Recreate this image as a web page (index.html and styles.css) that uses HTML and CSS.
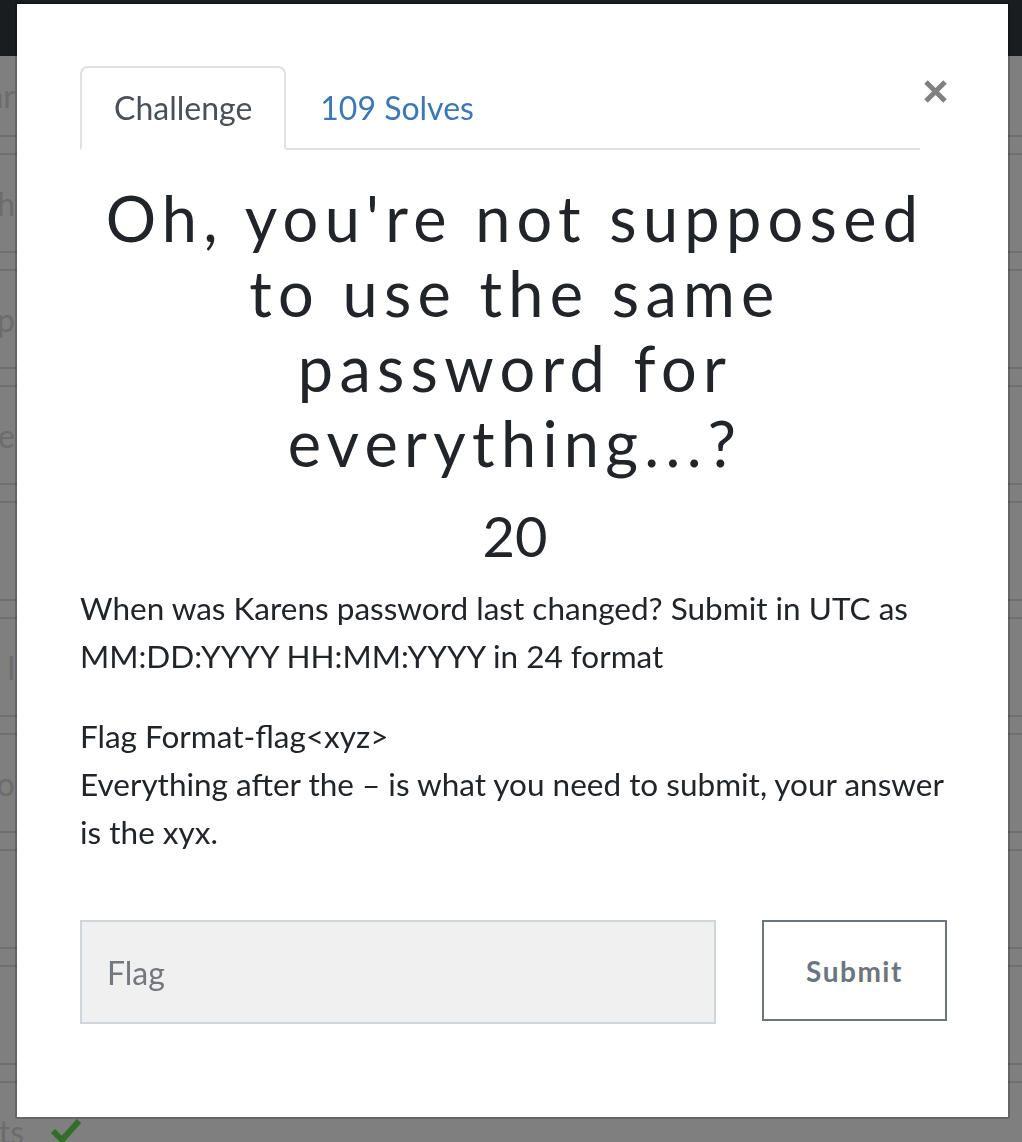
FILE: index.html
```html
<!DOCTYPE html>
<html lang="en">
<head>
<meta charset="utf-8">
<title>Challenge</title>
<link rel="stylesheet" href="styles.css">
</head>
<body>
<div class="page">
  <header class="navbar"></header>
  <div class="rows">
    <div class="row row-first"><span class="cell">ar</span></div>
    <div class="row"><span class="cell">h</span></div>
    <div class="row"><span class="cell">p</span></div>
    <div class="row"><span class="cell">ve</span></div>
    <div class="row"><span class="cell"></span></div>
    <div class="row"><span class="cell">l</span></div>
    <div class="row"><span class="cell">o</span></div>
    <div class="row"><span class="cell"></span></div>
    <div class="row"><span class="cell"></span></div>
    <div class="row"><span class="cell wide">ts</span>
      <svg class="check" width="32" height="30" viewBox="0 0 32 30"><path d="M3 14 L12 23 L29 4" fill="none" stroke="currentColor" stroke-width="6"/></svg>
    </div>
  </div>
</div>
<div class="backdrop"></div>
<div class="modal">
  <div class="modal-header">
    <ul class="tabs">
      <li class="tab active">Challenge</li>
      <li class="tab">109 Solves</li>
    </ul>
    <div class="close">
      <svg width="23" height="23" viewBox="0 0 23 23"><path d="M2 2 L21 21 M21 2 L2 21" stroke="#808080" stroke-width="5"/></svg>
    </div>
  </div>
  <h3 class="name">Oh, you're not supposed to use the same password for everything...?</h3>
  <h4 class="value">20</h4>
  <div class="desc">
    <p>When was Karens password last changed? Submit in UTC as MM:DD:YYYY HH:MM:YYYY in 24 format</p>
    <p>Flag Format-flag&lt;xyz&gt;<br>Everything after the – is what you need to submit, your answer is the xyx.</p>
  </div>
  <form class="flag-form">
    <input class="flag-input" type="text" placeholder="Flag">
    <button class="submit" type="button">Submit</button>
  </form>
</div>
</body>
</html>
```
FILE: styles.css
```css
html, body {
  margin: 0;
  padding: 0;
}
body {
  font-family: Lato, "Liberation Sans", sans-serif;
  background: #fff;
  color: #212529;
  overflow: hidden;
}
.navbar {
  height: 56px;
  background: #343a40;
}
.row {
  display: flex;
  align-items: center;
  height: 96px;
  margin-top: 16px;
  border-top: 2px solid #dedede;
  border-bottom: 2px solid #dedede;
  font-size: 32px;
  color: #d8d8d8;
}
.row-first {
  height: 79px;
  margin-top: 0;
  border-top: none;
}
.cell {
  width: 15px;
  display: flex;
  justify-content: flex-end;
  overflow: hidden;
  white-space: nowrap;
}
.cell.wide {
  width: 24px;
}
.check {
  margin-left: 26px;
  color: #62de50;
  margin-top: 2px;
}
.backdrop {
  position: fixed;
  inset: 0;
  background: rgba(0, 0, 0, 0.5);
}
.modal {
  position: fixed;
  top: 2px;
  left: 15px;
  width: 995px;
  box-sizing: border-box;
  background: #fff;
  border: 2px solid rgba(0, 0, 0, 0.2);
  border-radius: 2px;
  padding: 62px 58px 93px 63px;
  background-clip: padding-box;
}
.modal-header {
  display: flex;
  align-items: flex-start;
}
.tabs {
  flex: 1;
  display: flex;
  list-style: none;
  margin: 0;
  padding: 0;
  border-bottom: 2px solid #dee2e6;
}
.tab {
  margin-bottom: -2px;
  padding: 16px 32px;
  border: 2px solid transparent;
  border-radius: 8px 8px 0 0;
  font-size: 32px;
  line-height: 48px;
  color: #3c78b5;
}
.tab.active {
  color: #495057;
  background: #fff;
  border-color: #dee2e6 #dee2e6 #fff;
}
.close {
  width: 30px;
  display: flex;
  justify-content: center;
  margin-top: 14px;
}
.name {
  margin: 30px 0 22px;
  padding: 0 15px;
  font-size: 63px;
  line-height: 75px;
  font-weight: 400;
  letter-spacing: 0.1em;
  text-align: center;
}
.value {
  margin: 0 0 15px;
  font-size: 56px;
  line-height: 67px;
  font-weight: 400;
  text-align: center;
}
.desc p {
  margin: 0 0 32px;
  font-size: 31.5px;
  line-height: 48px;
}
.flag-form {
  display: flex;
  align-items: flex-start;
  gap: 46px;
  margin-top: 64px;
}
.flag-input {
  width: 636px;
  height: 104px;
  box-sizing: border-box;
  border: 2px solid #d0d6dc;
  background: #f0f0f0;
  padding: 0 25px;
  font-family: Lato, "Liberation Sans", sans-serif;
  font-size: 32px;
  color: #495057;
  outline: none;
}
.flag-input::placeholder {
  color: #72787e;
}
.submit {
  width: 185px;
  height: 101px;
  box-sizing: border-box;
  border: 2px solid #6c757d;
  background: #fff;
  color: #6c757d;
  font-family: Lato, "Liberation Sans", sans-serif;
  font-size: 28px;
  font-weight: 700;
  letter-spacing: 1.5px;
}
```
